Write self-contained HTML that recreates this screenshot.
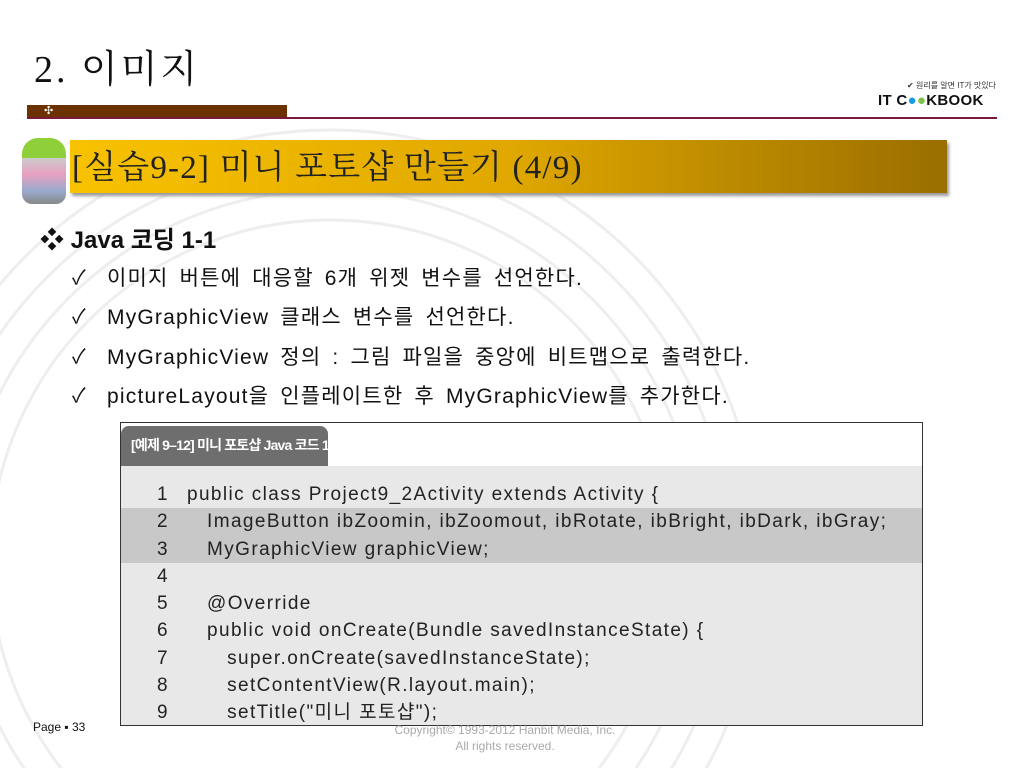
<!DOCTYPE html>
<html><head><meta charset="utf-8"><style>
html,body{margin:0;width:1024px;height:768px;overflow:hidden}
body{background:#fff;position:relative;font-family:"Liberation Sans","Noto Sans CJK KR",sans-serif}
.a{position:absolute}
.code{font-family:"Liberation Sans","Noto Sans CJK KR",sans-serif;font-size:19px;letter-spacing:1.4px;color:#222;white-space:pre}
</style></head><body>
<svg class="a" style="left:0;top:0" width="1024" height="768"><g fill="none" stroke="#eee" stroke-width="3">
<circle cx="330" cy="560" r="430"/><circle cx="330" cy="560" r="400"/><circle cx="330" cy="560" r="370"/><circle cx="330" cy="560" r="340"/></g></svg>
<div class="a" style="left:34px;top:38px;font-family:'Liberation Serif','Noto Serif CJK SC','Noto Sans CJK KR',serif;font-size:38px;letter-spacing:3px;color:#111">2. 이미지</div>
<div class="a" style="left:27px;top:105px;width:260px;height:13px;background:#6b3200"></div>
<div class="a" style="left:44px;top:104px;color:#fff;font-size:11px">✣</div>
<div class="a" style="left:27px;top:117px;width:970px;height:2px;background:#7a1a3a"></div>
<div class="a" style="left:905px;top:80px;width:91px;text-align:right;font-size:8px;color:#333;white-space:nowrap">✔ 원리를 알면 IT가 맛있다</div>
<div class="a" style="left:878px;top:92px;font-size:15px;font-weight:bold;color:#111;letter-spacing:0.3px;white-space:nowrap">IT C<span style="color:#1a9be0">●</span><span style="color:#7dc242">●</span>KBOOK</div>
<div class="a" style="left:70px;top:140px;width:877px;height:53px;background:linear-gradient(90deg,#f8c200,#e0a800 50%,#9a6e00);box-shadow:2px 3px 3px #999"></div>
<div class="a" style="left:22px;top:138px;width:44px;height:66px;border-radius:16px 16px 10px 10px;background:linear-gradient(#8fcf3a 0 30%,#ccc 30%,#e6a0c0 55%,#9ac 80%,#888)"></div>
<div class="a" style="left:72px;top:141px;font-family:'Liberation Serif','Noto Serif CJK SC','Noto Sans CJK KR',serif;font-size:33px;letter-spacing:1.2px;color:#222;white-space:nowrap">[실습9-2] 미니 포토샵 만들기 (4/9)</div>
<div class="a" style="left:40px;top:220px;font-size:24px;font-weight:bold;color:#111;white-space:nowrap">❖ Java 코딩 1-1</div>
<div class="a" style="left:72px;top:259px;font-size:20px;line-height:39.3px;color:#111;white-space:nowrap">
<div>✓<span style="position:absolute;left:35px;font-size:21px;letter-spacing:1.2px;word-spacing:4px">이미지 버튼에 대응할 6개 위젯 변수를 선언한다.</span></div>
<div>✓<span style="position:absolute;left:35px;font-size:21px;letter-spacing:1.2px;word-spacing:4px">MyGraphicView 클래스 변수를 선언한다.</span></div>
<div>✓<span style="position:absolute;left:35px;font-size:21px;letter-spacing:1.2px;word-spacing:4px">MyGraphicView 정의 : 그림 파일을 중앙에 비트맵으로 출력한다.</span></div>
<div>✓<span style="position:absolute;left:35px;font-size:21px;letter-spacing:1.2px;word-spacing:4px">pictureLayout을 인플레이트한 후 MyGraphicView를 추가한다.</span></div></div>
<div class="a" style="left:120px;top:422px;width:801px;height:302px;border:1px solid #333;background:#fff;overflow:hidden">
<div class="a" style="left:0;top:3px;width:207px;height:40px;background:#6e6e6e;border-radius:8px 8px 0 0"></div>
<div class="a" style="left:10px;top:12px;color:#fff;font-size:14px;font-weight:bold;letter-spacing:-0.8px;white-space:nowrap">[예제 9–12] 미니 포토샵 Java 코드 1</div>
<div class="a" style="left:0;top:43px;width:801px;height:260px;background:#e8e8e8"></div>
<div class="a" style="left:0;top:85px;width:801px;height:55px;background:#c8c8c8"></div>
<div class="a" style="left:36px;top:58px;font-size:19px;color:#222;line-height:27.3px">1<br>2<br>3<br>4<br>5<br>6<br>7<br>8<br>9</div>
<div class="a code" style="left:66px;top:58px;line-height:27.3px">public class Project9_2Activity extends Activity {
   ImageButton ibZoomin, ibZoomout, ibRotate, ibBright, ibDark, ibGray;
   MyGraphicView graphicView;

   @Override
   public void onCreate(Bundle savedInstanceState) {
      super.onCreate(savedInstanceState);
      setContentView(R.layout.main);
      setTitle("미니 포토샵");</div>
</div>
<div class="a" style="left:33px;top:720px;font-size:12px;color:#111">Page ▪ 33</div>
<div class="a" style="left:360px;top:722px;width:290px;text-align:center;font-size:12px;color:#aaa;line-height:16px">Copyright© 1993-2012 Hanbit Media, Inc.<br>All rights reserved.</div>
</body></html>
